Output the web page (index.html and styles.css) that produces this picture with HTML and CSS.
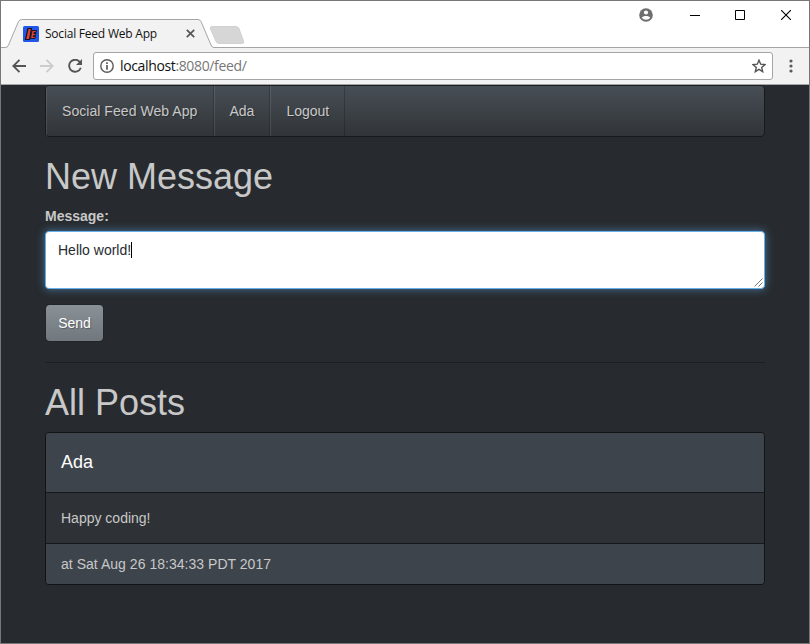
FILE: index.html
```
<!DOCTYPE html>
<html lang="en">
<head>
<meta charset="utf-8">
<title>Social Feed Web App</title>
<link rel="stylesheet" href="styles.css">
</head>
<body>
<div class="window">
  <header class="titlebar">
    <div class="tab">
      <svg class="tab-shape" width="246" height="30" viewBox="0 0 246 30">
        <path d="M0 28.5H5Q7 28.5 8 26L18 2.500Q19 .5 21 .5H197Q199 .5 200 2.500L210.500 26Q211.500 28.500 213.500 28.500H246V30H0Z" fill="#f2f2f2"/>
        <path d="M0 28.500H4.500Q6.500 28.500 7.500 26L17.500 2.500Q18.500 .5 20.500 .5H197Q199 .5 200 2.500L210 26Q211 28.500 213 28.500H246" fill="none" stroke="#a5a5a5"/>
        <path d="M211 7.500H235Q237 7.500 238 9.500L242.500 22Q243.500 24.500 241 24.500H218Q216 24.500 215 22.500L209.500 10Q208.500 7.500 211 7.500Z" fill="#d6d6d6" stroke="#c6c6c6" stroke-width=".7"/>
      </svg>
      <svg class="favicon" width="16" height="16" viewBox="0 0 16 16">
        <rect width="16" height="16" rx="1.500" fill="#2057e8"/>
        <path d="M5 2.500H8.500L6.500 13.500H2.500Z" fill="#e5402c" stroke="#101225" stroke-width="1.200"/>
        <path d="M9 4.500H13.500L13 6.500H11L10.800 7.500H13L12.500 9.500H10.500L10.300 10.500H12.500L12 12.500H7.500Z" fill="#e5402c" stroke="#101225" stroke-width=".9"/>
      </svg>
      <span class="tab-title">Social Feed Web App</span>
      <svg class="tab-close" width="9" height="9" viewBox="0 0 9 9"><path d="M.8 .8L8.200 8.200M8.200 .8L.8 8.200" stroke="#555" stroke-width="1.700"/></svg>
    </div>
    <div class="controls">
      <svg width="14" height="14" viewBox="0 0 14 14"><circle cx="7" cy="7" r="6.800" fill="#6e6e6e"/><circle cx="7" cy="4.500" r="2.100" fill="#fff"/><path d="M2.800 9.700C4 7.300 10 7.300 11.200 9.700C9.500 12.300 4.500 12.300 2.800 9.700Z" fill="#fff"/></svg>
      <svg width="10" height="11" viewBox="0 0 10 11"><path d="M0 5.500H10" stroke="#000"/></svg>
      <svg width="10" height="10" viewBox="0 0 10 10"><path d="M.5 .5H9.500V9.500H.5Z" fill="none" stroke="#000"/></svg>
      <svg width="10" height="10" viewBox="0 0 10 10"><path d="M0 0L10 10M10 0L0 10" stroke="#000" stroke-width="1.100"/></svg>
    </div>
  </header>

  <div class="toolbar">
    <svg class="nav-icon" width="14" height="14" viewBox="0 0 14 14"><path d="M14 7H1.500M7.500 .8L1.300 7L7.500 13.200" fill="none" stroke="#555" stroke-width="1.900"/></svg>
    <svg class="nav-icon" width="14" height="14" viewBox="0 0 14 14"><path d="M0 7H12.500M6.500 .8L12.700 7L6.500 13.200" fill="none" stroke="#ccc" stroke-width="1.900"/></svg>
    <svg class="nav-icon" width="14" height="14" viewBox="0 0 14 14"><path d="M12 3.200A6 6 0 1 0 12.800 8.800" fill="none" stroke="#555" stroke-width="1.900"/><path d="M14 0V6H8Z" fill="#555"/></svg>
    <div class="address">
      <svg width="14" height="14" viewBox="0 0 14 14"><circle cx="7" cy="7" r="6.200" fill="none" stroke="#5a5a5a" stroke-width="1.400"/><path d="M7 6V10.800M7 3.300V4.900" stroke="#5a5a5a" stroke-width="1.700"/></svg>
      <span class="url"><span class="host">localhost</span>:8080/feed/</span>
      <svg width="14" height="14" viewBox="0 0 14 14"><path d="M7 1.200L8.700 5.200L13 5.600L9.700 8.400L10.700 12.700L7 10.400L3.300 12.700L4.300 8.400L1 5.600L5.300 5.200Z" fill="none" stroke="#555" stroke-width="1.400"/></svg>
    </div>
    <svg class="menu" width="4" height="14" viewBox="0 0 4 14"><g fill="#5a5a5a"><circle cx="2" cy="2" r="1.600"/><circle cx="2" cy="7" r="1.600"/><circle cx="2" cy="12" r="1.600"/></g></svg>
  </div>

  <main class="container">
    <nav class="navbar">
      <a class="brand">Social Feed Web App</a>
      <a>Ada</a>
      <a>Logout</a>
    </nav>
    <h1>New Message</h1>
    <form>
      <label>Message:</label>
      <div class="message-box">Hello world!<span class="caret"></span>
        <svg class="grip" width="9" height="9" viewBox="0 0 9 9"><path d="M.5 8.500L8.500 .5M4.500 8.500L8.500 4.500" stroke="#555" stroke-width=".8"/></svg>
      </div>
      <button type="button">Send</button>
    </form>
    <hr>
    <h1>All Posts</h1>
    <article class="panel">
      <h2>Ada</h2>
      <p>Happy coding!</p>
      <footer>at Sat Aug 26 18:34:33 PDT 2017</footer>
    </article>
  </main>
</div>
</body>
</html>
```
FILE: styles.css
```
* { box-sizing: border-box; }
body { margin: 0; font: 14px/20px "Liberation Sans", Arial, sans-serif; color: #c8c8c8; }
svg { display: block; flex: none; }
.window { width: 810px; height: 644px; border: 1px solid #777; background: #272b30; overflow: hidden; }
.titlebar { height: 47px; display: flex; justify-content: space-between; background: #fff; border-bottom: 1px solid #a5a5a5; }
.tab { position: relative; display: flex; align-items: center; width: 246px; height: 29px; margin-top: 18px; padding-left: 22px; }
.tab-shape { position: absolute; left: 0; top: 0; }
.favicon, .tab-title, .tab-close { position: relative; }
.tab-title { width: 112px; margin: 0 28.5px 0 6px; font: 12px/16px "Open Sans", sans-serif; letter-spacing: -.22px; color: #111; white-space: nowrap; }
.controls { display: flex; align-items: center; height: 28px; padding-right: 18px; }
.controls svg + svg { margin-left: 35px; }
.controls svg:nth-child(2) { margin-left: 37px; }
.controls svg:last-child { margin-left: 36px; }
.toolbar { display: flex; align-items: center; height: 37px; padding: 0 16px 0 11px; background: #f2f2f2; border-bottom: 1px solid #a5a5a5; }
.nav-icon { margin-right: 14px; }
.nav-icon:nth-child(3) { margin-right: 11px; }
.address { flex: 1; display: flex; align-items: center; height: 28px; padding: 0 6px; background: #fff; border: 1px solid #a5a5a5; border-radius: 3px; }
.url { flex: 1; margin-left: 6px; font: 14px/20px "Open Sans", sans-serif; letter-spacing: -.36px; color: #777; }
.host { color: #111; }
.menu { margin-left: 16px; }
.container { width: 720px; margin-left: 44px; }
.navbar { display: flex; height: 52px; margin-bottom: 20px; border: 1px solid #17191c; border-radius: 4px; background: linear-gradient(#484e55, #3a3f44 60%, #313539); text-shadow: 1px 1px 1px rgba(0,0,0,.3); }
.navbar a { padding: 15px; border-left: 1px solid rgba(255,255,255,.1); border-right: 1px solid rgba(0,0,0,.2); }
.navbar .brand { width: 167.5px; letter-spacing: .05px; }
h1 { margin: 0 0 10px; font-size: 36px; font-weight: 400; line-height: 39px; }
label { display: block; margin-bottom: 5px; font-weight: 700; }
.message-box { position: relative; height: 58px; margin-bottom: 15px; padding: 8px 12px; color: #272b30; background: #fff; border: 1px solid #66afe9; border-radius: 4px; box-shadow: 0 0 8px rgba(102,175,233,.6); }
.caret { display: inline-block; width: 1px; height: 16px; background: #000; vertical-align: -3px; }
.grip { position: absolute; right: 1px; bottom: 1px; }
button { display: block; width: 59px; height: 38px; padding: 0; border: 1px solid #22262a; border-radius: 4px; background: linear-gradient(#8a9196, #7a8288 60%, #70787d); background-clip: padding-box; color: #fff; font: inherit; text-shadow: 1px 1px 1px rgba(0,0,0,.3); }
hr { height: 1px; margin: 20px 0; border: 0; background: #1c1e22; }
.panel { border: 1px solid #111315; border-radius: 4px; background: #2e3236; overflow: hidden; }
.panel h2 { margin: 0; padding: 19px 15px 20px; font-size: 18px; font-weight: 400; line-height: 20px; color: #fff; background: #3e444c; }
.panel p { margin: 0; padding: 15px; border: solid #16181b; border-width: 1px 0; }
.panel footer { padding: 10px 15px; background: #3e444c; letter-spacing: .03px; }
```
